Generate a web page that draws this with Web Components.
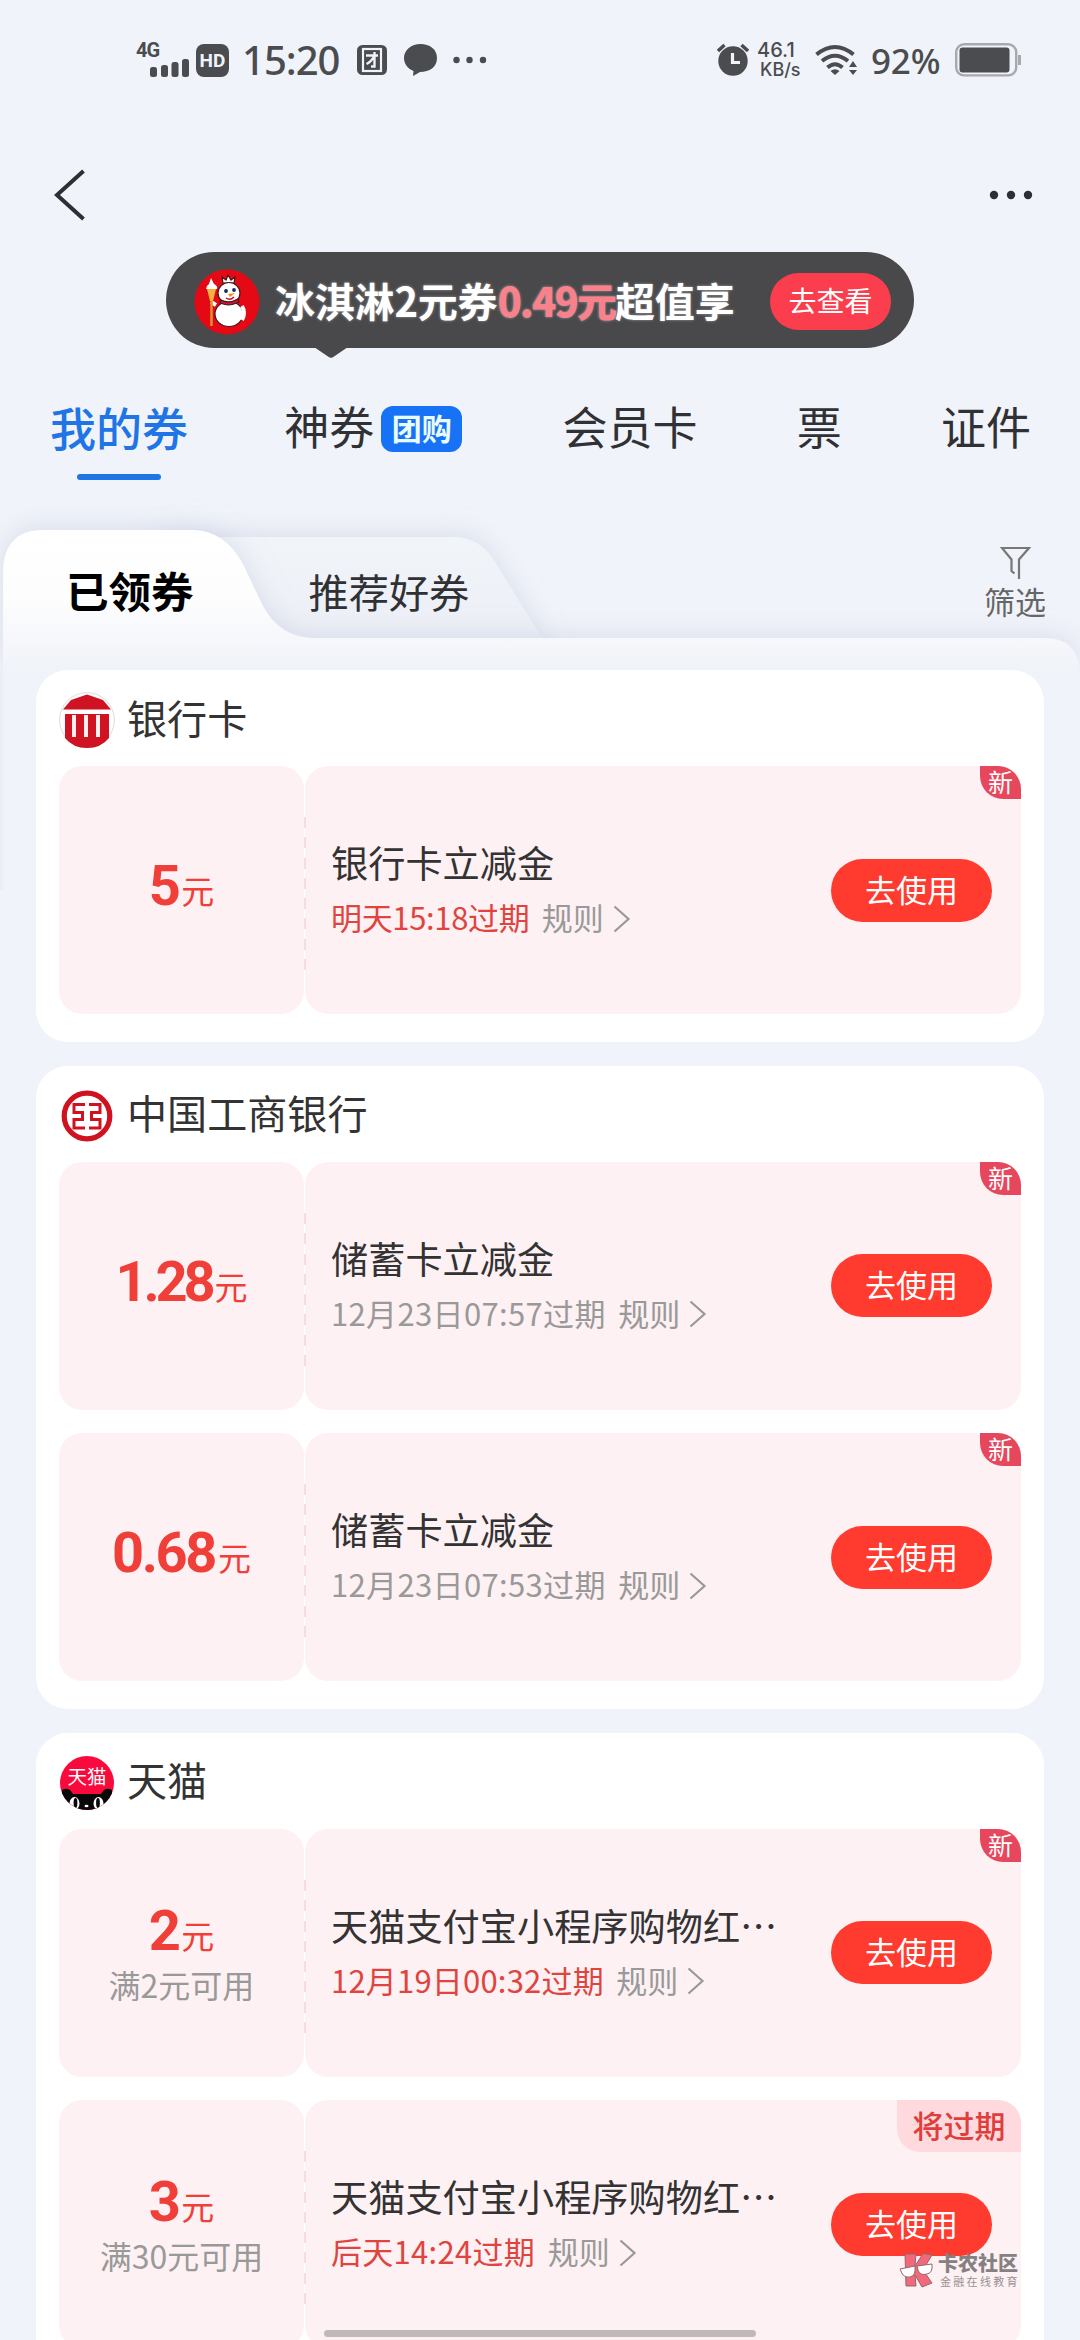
<!DOCTYPE html>
<html lang="zh-CN">
<head>
<meta charset="utf-8">
<title>我的券</title>
<style>
  html { background: #f0f3f9; }
  body { margin: 0; width: 1080px; height: 2340px; overflow: hidden; font-family: "Noto Sans CJK SC", sans-serif; color: #333; background: #f0f3f9; }
</style>
</head>
<body>
<wallet-page></wallet-page>
<script>
const define = (name, html, setup) => customElements.define(name, class extends HTMLElement {
  connectedCallback() {
    if (this.shadowRoot) return;
    const t = document.createElement('template');
    t.innerHTML = typeof html === 'function' ? html(this) : html;
    this.attachShadow({ mode: 'open' }).append(t.content.cloneNode(true));
    if (setup) setup(this);
  }
});

define('status-bar', `
<style>
  :host { display: flex; flex: none; height: 120px; align-items: center; box-sizing: border-box; padding: 0 59px 0 136px; color: #4b4c4f; font-family: "Noto Sans", sans-serif; }
  svg { display: block; flex: none; }
  .net { display: flex; flex-direction: column; width: 60px; height: 36px; }
  .g { font: 700 20px/17px Roboto, sans-serif; letter-spacing: -1px; height: 16px; }
  .net svg { margin-left: 14px; }
  .hd { width: 33px; height: 33px; border-radius: 8px; background: #4b4c4f; color: #f0f3f9; font: 700 19px/33px Roboto, sans-serif; text-align: center; }
  .time { font: 500 40px/48px "Noto Sans", sans-serif; margin-left: 13px; width: 101px; letter-spacing: -1px; white-space: nowrap; }
  .right { margin-left: auto; display: flex; align-items: center; }
  .rate { display: flex; flex-direction: column; font: 500 20px/19px Inter, sans-serif; margin-left: 8px; width: 58px; }
  .rate b { font-weight: 500; } .rate b + b { padding-left: 3px; font-size: 18px; }
  .pct { font: 500 35px/44px "Noto Sans", sans-serif; margin: 2px 0 0 14px; width: 84px; letter-spacing: -.2px; }
</style>
<div class="net"><span class="g">4G</span>
<svg width="42" height="20" viewBox="0 0 42 20" fill="#4b4c4f"><rect y="9" width="7" height="10" rx="2.5"/><rect x="11" y="7" width="7" height="12" rx="2.5"/><rect x="21.500" y="4" width="7" height="15" rx="2.5"/><rect x="32" y="1" width="7" height="18" rx="2.5"/></svg></div>
<div class="hd">HD</div>
<div class="time">15:20</div>
<svg style="margin-left:14px" width="30" height="30" viewBox="0 0 30 30"><rect width="30" height="30" rx="5.500" fill="#4b4c4f"/><rect x="6" y="4" width="18" height="22" fill="none" stroke="#f0f3f9" stroke-width="2.200"/><path d="M9 10.500H21M17.500 7V21.500H14M17 11.500Q14 17 9.500 19" fill="none" stroke="#f0f3f9" stroke-width="2.400"/></svg>
<svg style="margin-left:17px" width="33" height="32" viewBox="0 0 33 32"><path d="M16.500 0C7.500 0 0 6 0 14c0 6 4 11 9.500 13L9 32l7-4c9.500 0 17-5 17-14S25.500 0 16.500 0z" fill="#4b4c4f"/></svg>
<svg style="margin-left:16px" width="34" height="8" viewBox="0 0 34 8" fill="#4b4c4f"><circle cx="3.500" cy="4" r="3.200"/><circle cx="16.500" cy="4" r="3.200"/><circle cx="30" cy="4" r="3.200"/></svg>
<div class="right">
<svg width="32" height="34" viewBox="0 0 32 34"><circle cx="16" cy="18" r="14.700" fill="#4b4c4f"/><path d="M1 8L7.500 2M31 8L24.500 2" stroke="#4b4c4f" stroke-width="3.500"/><path d="M15.500 10V19.500H23" fill="none" stroke="#f0f3f9" stroke-width="3.200"/></svg>
<div class="rate"><b>46.1</b><b>KB/s</b></div>
<svg width="42" height="32" viewBox="0 0 42 32"><g fill="none" stroke="#4b4c4f" stroke-width="4"><path d="M1.500 10.500Q20 -4.500 38.500 10.500"/><path d="M7 17Q20 6.500 33 17"/><path d="M12.500 23.500Q20 17 27.500 23.500"/></g><path d="M15.500 27Q20 23.500 24.500 27L20 31z" fill="#4b4c4f"/><path d="M38 17l4 6h-8zM38 31l4-5h-8z" fill="#4b4c4f"/></svg>
<div class="pct">92%</div>
<svg width="66" height="34" viewBox="0 0 66 34"><rect x="1.200" y="1.200" width="60" height="31.200" rx="8" fill="none" stroke="#a7a9ad" stroke-width="2.400"/><rect x="4.500" y="4.500" width="50" height="25" rx="3" fill="#4b4c4f"/><path d="M64.500 12v10" stroke="#a7a9ad" stroke-width="3"/></svg>
</div>`);

define('nav-bar', `
<style>:host { display: flex; flex: none; justify-content: space-between; align-items: center; height: 132px; box-sizing: border-box; padding: 18px 47px 0 54px; } svg { display: block; }</style>
<svg width="34" height="52" viewBox="0 0 34 52"><path d="M29.500 2L3 26L29.500 50" fill="none" stroke="#2d2f33" stroke-width="4"/></svg>
<svg width="44" height="12" viewBox="0 0 44 12" fill="#2d2f33"><circle cx="5" cy="6" r="4.200"/><circle cx="22" cy="6" r="4.200"/><circle cx="39" cy="6" r="4.200"/></svg>`);

define('promo-banner', `
<style>
  :host { display: flex; flex: none; flex-direction: column; width: 748px; height: 106px; margin-left: 166px; }
  .pill { display: flex; align-items: center; height: 96px; box-sizing: border-box; border-radius: 48px; background: #49494b; padding: 3px 23px 0 28px; }
  .txt { font-weight: 700; font-size: 40px; line-height: 60px; color: #fff; white-space: nowrap; margin: -4px 0 0 15px; letter-spacing: -.2px; text-shadow: 0 0 3px rgba(255,255,255,.45); }
  .txt b { color: #f8818b; letter-spacing: -1.900px; }
  .btn { margin-left: auto; width: 121px; height: 57px; border-radius: 29px; background: #fa3e4d; color: #fff; font-size: 28px; line-height: 54px; text-align: center; }
  .tail { display: block; margin-left: 148px; margin-top: -1px; }
</style>
<div class="pill">
<svg width="66" height="66" viewBox="0 0 66 66"><circle cx="33" cy="33" r="32.500" fill="#e50916"/>
<g stroke="#4a1518" stroke-width="1.200"><path d="M29 14l-1-6 4 3 2-5 3 5 4-3-1 6z" fill="#fff"/><ellipse cx="35" cy="45" rx="14" ry="12.500" fill="#fff"/><ellipse cx="35" cy="24" rx="11" ry="10.500" fill="#fff"/><path d="M26 34Q35 38 45 33l-1-3Q35 35 27 31z" fill="#c7173a"/><path d="M22 36L17 33M48 37Q52 44 48 51" fill="none" stroke="#fff" stroke-width="4"/></g>
<path d="M17.500 22V57" stroke="#d99231" stroke-width="2.500"/><path d="M13 20h9l-3 12h-3z" fill="#f3b13e"/><path d="M12 20q0-3 3-5l2-6 3 6q4 2 3 5z" fill="#fff"/><circle cx="32" cy="22" r="1.900" fill="#16285b"/><circle cx="40" cy="21" r="1.900" fill="#16285b"/><path d="M34 25l7-1-5 4z" fill="#f08c21"/><path d="M32 29q4 3 8-1" fill="none" stroke="#b11" stroke-width="1.300"/></svg>
<div class="txt">冰淇淋2元券<b>0.49元</b>超值享</div><div class="btn">去查看</div></div>
<svg class="tail" width="34" height="11" viewBox="0 0 34 11"><path d="M0 0H34L20 9.500Q17 12 14 9.500z" fill="#49494b"/></svg>`);

define('main-tabs', `
<style>
  :host { display: flex; flex: none; justify-content: space-between; height: 142px; box-sizing: border-box; padding: 38px 49px 0 50px; font-size: 45px; line-height: 60px; white-space: nowrap; color: #303134; }
  .on { display: flex; flex-direction: column; align-items: center; font-size: 46px; font-weight: 500; color: #1f75e6; }
  .on i { width: 84px; height: 6px; border-radius: 3px; background: #1f75e6; margin-top: 18px; }
  .with { display: flex; gap: 7px; margin: 0 1px 0 -3px; }
  .badge { width: 81px; height: 46px; border-radius: 12px; background: #1772f6; color: #e9fcff; font-weight: 700; font-size: 30px; line-height: 43px; text-align: center; margin-top: 10px; }
</style>
<div class="on"><span>我的券</span><i></i></div><div class="with"><span>神券</span><span class="badge">团购</span></div><div>会员卡</div><div>票</div><div>证件</div>`);

define('sub-tabs', `
<style>
  :host { display: grid; flex: none; height: 170px; grid-template: 170px / 1080px; }
  :host > * { grid-area: 1 / 1; }
  svg { display: block; }
  .bg { grid-area: 1 / 1; overflow: visible; }
  .row { grid-area: 1 / 1; display: flex; align-items: flex-start; z-index: 1; padding: 0 34px 0 66px; line-height: 60px; white-space: nowrap; }
  .a { font-size: 42.500px; font-weight: 700; color: #000; margin-top: 60px; }
  .b { font-size: 40.200px; color: #303134; margin: 61px 0 0 115px; }
  .f { display: flex; flex-direction: column; align-items: center; margin: 46px 0 0 auto; font-size: 31px; line-height: 40px; color: #666; }
  .f span { margin-top: 1px; }
</style>
<svg class="bg" width="1080" height="170" viewBox="0 0 1080 170">
<defs><linearGradient id="w" gradientUnits="userSpaceOnUse" x1="0" y1="30" x2="0" y2="170"><stop offset="0" stop-color="#fff"/><stop offset=".5" stop-color="#fdfdfe"/><stop offset="1" stop-color="#f0f3f9"/></linearGradient>
<linearGradient id="g" x1="0" y1="0" x2="0" y2="1"><stop offset="0" stop-color="#f1f4f9"/><stop offset="1" stop-color="#eaedf4"/></linearGradient>
<filter id="s" x="-10%" y="-60%" width="120%" height="220%"><feDropShadow dx="0" dy="-3" stdDeviation="12" flood-color="#c6cce0" flood-opacity=".55"/></filter></defs>
<path d="M160 37H455Q480 38 494 60L542 138V170H160z" fill="url(#g)" filter="url(#s)"/>
<path d="M3 170V74Q3 30 43 30H194Q225 31 243 64L262 104Q279 138 315 138H1046Q1076 138 1080 170z" fill="url(#w)" filter="url(#s)"/>
<path d="M0 170H1080V215H0z" fill="#f0f3f9"/>
<rect x="0" y="170" width="3" height="220" fill="#ebeef5"/>
</svg>
<div class="row"><span class="a">已领券</span><span class="b">推荐好券</span><div class="f"><svg width="31" height="34" viewBox="0 0 31 34"><path d="M14.500 27.500L11.500 25V13.500L2 2H29L19 13.500V33" fill="none" stroke="#777" stroke-width="2.200"/></svg><span>筛选</span></div></div>`);

const ICONS = {
  bank: `<circle cx="28" cy="28" r="27.400" fill="#fff" stroke="#ddd" stroke-width="1"/><path d="M4 17.500L12 8L28 2.500L44 8L52 17.500z" fill="#cf1322"/><path d="M6 22H50V46Q42 56 28 56Q14 56 6 46z" fill="#cf1322"/><path d="M15 23V45M27 23V45M39 23V45" stroke="#fdeff0" stroke-width="4"/><path d="M5 20H51" stroke="#fff" stroke-width="3"/>`,
  icbc: `<circle cx="28" cy="28" r="22.800" fill="#fff" stroke="#cf1120" stroke-width="5.200"/><g fill="none" stroke="#cf1120" stroke-width="3"><path d="M26 16.500H15V24.500H23.500V31.500H15V40H26"/><path d="M30 16.500H41V24.500H32.500V31.500H41V40H30"/></g>`,
  tmall: `<clipPath id="c"><circle cx="28" cy="28" r="27"/></clipPath><g clip-path="url(#c)"><rect width="56" height="56" fill="#fa0a3c"/><path d="M3 35q7-4 11 4h28q4-8 11-4v21H3z" fill="#080808"/><ellipse cx="15.500" cy="48.500" rx="5" ry="6.500" fill="#fff"/><ellipse cx="39.500" cy="48.500" rx="5" ry="6.500" fill="#fff"/><ellipse cx="16.500" cy="48" rx="1.900" ry="5" fill="#080808"/><ellipse cx="39" cy="48" rx="1.900" ry="5" fill="#080808"/><ellipse cx="27.500" cy="51" rx="2" ry="1.300" fill="#fff"/></g><text x="28" y="29" font-size="19.500" text-anchor="middle" fill="#fff" font-family="Noto Sans CJK SC, sans-serif">天猫</text>`
};
define('brand-icon', el => `<style>:host { display: block; width: 56px; height: 56px; } svg { display: block; }</style><svg width="56" height="56" viewBox="0 0 56 56">${ICONS[el.getAttribute('name')]}</svg>`);

define('coupon-group', el => `
<style>
  :host { display: flex; flex-direction: column; width: 1008px; box-sizing: border-box; background: #fff; border-radius: 32px; padding: 0 23px 28px; }
  header { display: flex; align-items: center; gap: 12px; height: 96px; padding-top: 4px; box-sizing: border-box; }
  h2 { margin: -7px 0 0; font-weight: 400; font-size: 40.100px; line-height: 60px; color: #333; }
  .list { display: flex; flex-direction: column; gap: 23.5px; }
</style>
<header><brand-icon name="${el.getAttribute('icon')}"></brand-icon><h2>${el.getAttribute('name')}</h2></header><div class="list"><slot></slot></div>`);

define('coupon-item', el => {
  const a = n => el.getAttribute(n) || '';
  return `
<style>
  :host { display: grid; grid-template-columns: 245px 716px; column-gap: 1px; height: 248px; position: relative; }
  .l, .r { background: #fef1f3; border-radius: 23px; display: flex; }
  .l { flex-direction: column; align-items: center; box-sizing: border-box; padding-top: ${a('cond') ? 71 : 89}px; }
  .amt { display: flex; align-items: baseline; color: #f03e38; height: 62px; line-height: 62px; white-space: nowrap; }
  .amt b { font: 700 56px/62px Roboto, sans-serif; letter-spacing: ${a('als') || -2.4}px; }
  .amt span { font-size: 33px; line-height: 62px; margin-left: 3px; transform: translateY(-1px); }
  .cond { color: #999; font-size: 32px; line-height: 44px; white-space: nowrap; }
  .r { align-items: center; justify-content: space-between; padding: 0 29px 0 26px; box-sizing: border-box; }
  .info { display: flex; flex-direction: column; white-space: nowrap; margin-top: -6px; }
  .t { font-size: 37.200px; line-height: 54px; color: #333; }
  .s { display: flex; align-items: center; font-size: 31px; line-height: 44px; margin-top: 6px; color: #999; letter-spacing: ${a('ls') || 0}px; }
  .s.hot i { color: #e0443f; }
  i { font-style: normal; } .rule { margin-left: 12.500px; letter-spacing: 0; }
  .s svg { margin: 3px 0 0 9px; }
  .btn { width: 161px; height: 63px; border-radius: 32px; background: #ff3b2f; color: #fff; font-size: 31px; line-height: 60px; text-align: center; }
  .dash { position: absolute; left: 244.500px; top: 51px; width: 2px; height: 154px; background: repeating-linear-gradient(#f6dcdf 0 11px, transparent 11px 20.300px); }
  .tag { position: absolute; right: 0; top: 0; border-radius: 0 23px 0 23px; white-space: nowrap; text-align: center; }
  .new { width: 41px; height: 33px; background: #e7475d; color: #fff; font-size: 25px; line-height: 31px; }
  .soon { width: 124px; height: 52px; background: #fedade; color: #df3f3c; font-size: 31px; font-weight: 500; line-height: 49px; }
</style>
<div class="l"><div class="amt"><b>${a('amount')}</b><span>元</span></div>${a('cond') ? `<div class="cond">${a('cond')}</div>` : ''}</div>
<div class="r"><div class="info"><div class="t">${a('name')}</div><div class="s ${a('hot') ? 'hot' : ''}"><i>${a('expire')}</i><span class="rule">规则</span><svg width="18" height="28" viewBox="0 0 18 28"><path d="M1.500 1.500L15.500 14L1.500 26.500" fill="none" stroke="#999" stroke-width="2.200"/></svg></div></div><div class="btn">去使用</div></div>
<div class="dash"></div><div class="tag ${a('tag') === '新' ? 'new' : 'soon'}">${a('tag')}</div>`;
});

define('community-mark', `
<style>
  :host { display: flex; gap: 4px; position: absolute; left: 899px; top: 2252px; z-index: 2; }
  .w { display: flex; flex-direction: column; white-space: nowrap; }
  .n { font-size: 20px; line-height: 22px; font-weight: 900; color: #858083; }
  .d { font-size: 11px; line-height: 14px; letter-spacing: 2.300px; padding-left: 2px; color: #989094; }
</style>
<svg width="35" height="37" viewBox="0 0 35 37"><g stroke="#8f686d" stroke-width="1"><path d="M6 2H17L16 14L24 1.500L33 3L24 18L33 31L23 35L16 23L17 34H7z" fill="#f3687a"/><path d="M1 17L16 14Q17 24 11 25Q4 26 2 19z" fill="#fff"/><path d="M18 14L33 12Q34 21 28 22Q21 24 19 18z" fill="#fff"/></g></svg>
<div class="w"><span class="n">卡农社区</span><span class="d">金融在线教育</span></div>`);

define('home-bar', `<style>:host { display: block; position: absolute; z-index: 2; left: 324px; top: 2330px; width: 432px; height: 7px; border-radius: 4px; background: #c1b8ba; }</style>`);

define('wallet-page', `
<style>
  :host { display: flex; flex-direction: column; position: relative; width: 1080px; height: 2340px; overflow: hidden; }
  .groups { display: flex; flex: none; flex-direction: column; gap: 23.500px; padding-left: 36px; z-index: 1; }
</style>
<status-bar></status-bar><nav-bar></nav-bar><promo-banner></promo-banner><main-tabs></main-tabs><sub-tabs></sub-tabs>
<div class="groups">
<coupon-group icon="bank" name="银行卡"><coupon-item amount="5" name="银行卡立减金" expire="明天15:18过期" hot="1" ls="-.35" tag="新"></coupon-item></coupon-group>
<coupon-group icon="icbc" name="中国工商银行"><coupon-item amount="1.28" als="-4.2" name="储蓄卡立减金" expire="12月23日07:57过期" ls=".35" tag="新"></coupon-item><coupon-item amount="0.68" name="储蓄卡立减金" expire="12月23日07:53过期" ls=".35" tag="新"></coupon-item></coupon-group>
<coupon-group icon="tmall" name="天猫"><coupon-item amount="2" cond="满2元可用" name="天猫支付宝小程序购物红…" expire="12月19日00:32过期" hot="1" ls=".2" tag="新"></coupon-item><coupon-item amount="3" cond="满30元可用" name="天猫支付宝小程序购物红…" expire="后天14:24过期" hot="1" ls=".3" tag="将过期"></coupon-item></coupon-group>
</div>
<community-mark></community-mark><home-bar></home-bar>`);
</script>
</body>
</html>
